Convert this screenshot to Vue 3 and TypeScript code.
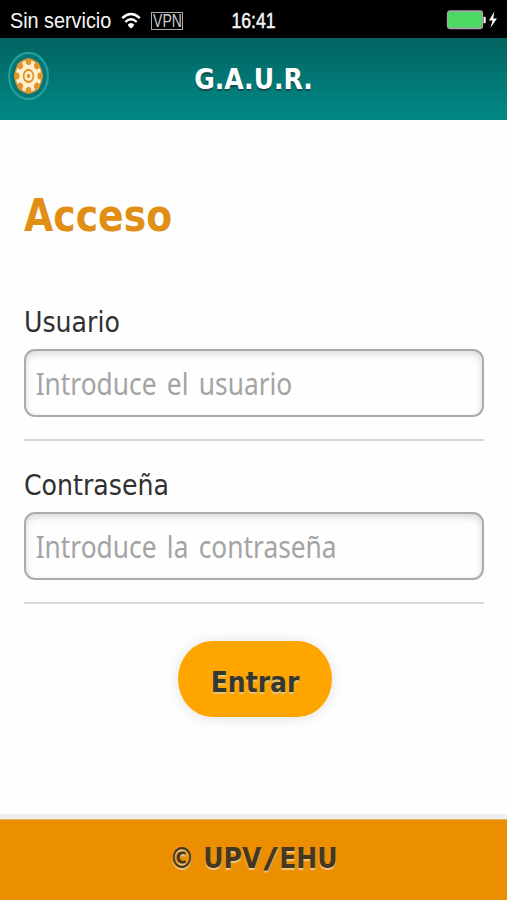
<script setup lang="ts">
import { ref } from 'vue'

interface Field {
  id: string
  label: string
  placeholder: string
  type: 'text' | 'password'
}

const fields: Field[] = [
  { id: 'user', label: 'Usuario', placeholder: 'Introduce el usuario', type: 'text' },
  { id: 'password', label: 'Contraseña', placeholder: 'Introduce la contraseña', type: 'password' },
]
const values = ref<Record<string, string>>({ user: '', password: '' })
const notches = [0, 45, 90, 135, 180, 225, 270, 315]
</script>

<template>
  <div class="screen">
    <div class="status">
      <div class="carrier">
        <span class="carrier-name">Sin servicio</span>
        <svg class="wifi" width="20" height="18" viewBox="0 0 20 18">
          <path d="M1.2 6.2Q10-2 18.8 6.2M4.3 10Q10 4.6 15.7 10" fill="none" stroke="#fff" stroke-width="2.4" />
          <path d="M6.8 12.6Q10 9.6 13.2 12.6Q13 14.5 10 16.6Q7 14.5 6.8 12.6Z" fill="#fff" />
        </svg>
        <span class="vpn"><span class="vpn-text">VPN</span></span>
      </div>
      <span class="clock">16:41</span>
      <svg class="battery" width="52" height="22" viewBox="0 0 52 22">
        <rect x="1.5" y="2" width="35" height="17.5" rx="2.5" fill="#4cd964" stroke="#b39cae" stroke-width="1.3" />
        <path d="M37.5 7.7h1.2q1 0 1 1v4.6q0 1-1 1h-1.2z" fill="#fff" />
        <path d="M48.3 2.5L43 11.6h3.6L44.4 19 51 9.6h-3.7z" fill="#fff" />
      </svg>
    </div>

    <header class="header">
      <button class="settings" type="button" aria-label="Ajustes">
        <svg width="44" height="52" viewBox="0 0 44 52">
          <ellipse cx="22" cy="26" rx="19.8" ry="23.6" fill="#047676" stroke="#22a09d" stroke-width="2.2" />
          <ellipse cx="22" cy="26" rx="14.4" ry="18" fill="#df952a" />
          <g transform="translate(22 26) scale(1 1.24)">
            <circle r="13" fill="#fff0d2" />
            <circle
              v-for="angle in notches"
              :key="angle"
              cy="-12"
              r="2.9"
              fill="#df952a"
              :transform="`rotate(${angle})`"
            />
            <circle r="5" fill="#fff0d2" stroke="#df952a" stroke-width="1.8" />
            <circle r="1.8" fill="#df952a" />
          </g>
        </svg>
      </button>
      <h1 class="title">G.A.U.R.</h1>
    </header>

    <form class="content" @submit.prevent>
      <h2 class="heading">Acceso</h2>
      <div v-for="field in fields" :key="field.id" class="field">
        <label class="label" :for="field.id">{{ field.label }}</label>
        <div class="box">
          <input
            :id="field.id"
            v-model="values[field.id]"
            class="input"
            :type="field.type"
            :placeholder="field.placeholder"
          />
        </div>
      </div>
      <button class="submit" type="submit"><span class="submit-text">Entrar</span></button>
    </form>

    <footer class="footer">
      <div class="footer-text">© UPV<span class="slash">/</span>EHU</div>
    </footer>
  </div>
</template>

<style>
body {
  margin: 0;
  background: #fefefe;
}
</style>

<style scoped>
.screen {
  display: flex;
  flex-direction: column;
  width: 100%;
  height: 900px;
  overflow: hidden;
  background: #fefefe;
  font-family: 'DejaVu Sans', sans-serif;
  color: #303030;
}

.status {
  display: grid;
  grid-template-columns: 1fr auto 1fr;
  align-items: center;
  box-sizing: border-box;
  height: 38px;
  padding: 0 9px 0 10px;
  background: #000;
  color: #f5f5f5;
  font: 22px/38px 'Liberation Sans', sans-serif;
}

.carrier {
  display: flex;
  align-items: center;
  padding-top: 1px;
}

.carrier-name {
  width: 111px;
  white-space: nowrap;
  transform: scaleX(0.9);
  transform-origin: left;
}

.vpn {
  display: flex;
  justify-content: center;
  box-sizing: border-box;
  width: 32px;
  height: 18px;
  margin-left: 10px;
  border: 1px solid #aaa;
  font-size: 18px;
  line-height: 17px;
  color: #ccc;
}

.vpn-text {
  transform: scaleX(0.78);
}

.clock {
  padding-top: 2px;
  -webkit-text-stroke: 0.5px #f5f5f5;
  transform: scaleX(0.8);
}

.battery {
  justify-self: end;
}

.header {
  display: grid;
  grid-template-columns: 50px 1fr 50px;
  align-items: center;
  height: 82px;
  background: linear-gradient(#026360, #028785 92%, #028785);
}

.settings {
  display: flex;
  margin: 0 0 7px 7px;
  padding: 0;
  border: 0;
  background: none;
}

.title {
  margin: 0;
  text-align: center;
  font-size: 29px;
  line-height: 80px;
  color: #fff;
  text-shadow: 0 2px 1px #154d4c;
  transform: scaleX(0.865);
}

.content {
  display: flex;
  flex: 1;
  flex-direction: column;
  padding: 66px 23px 0 24px;
}

.heading {
  margin: 0 0 63px;
  font-size: 45px;
  line-height: 60px;
  color: #e18f14;
  transform: scaleX(0.84);
  transform-origin: left;
}

.field {
  box-sizing: border-box;
  height: 132px;
  margin-bottom: 31px;
  border-bottom: 2px solid #d8d8d8;
}

.label {
  display: block;
  height: 40px;
  font-size: 29px;
  line-height: 27px;
  transform: scaleX(0.87);
  transform-origin: left;
}

.box {
  box-sizing: border-box;
  height: 68px;
  border: 2px solid #ababab;
  border-radius: 11px;
  box-shadow: inset 0 3px 7px #d8d8d8;
  overflow: hidden;
}

.input {
  box-sizing: border-box;
  width: 114%;
  height: 64px;
  padding: 0 10px 0 11px;
  border: 0;
  outline: 0;
  background: transparent;
  font: 30px/60px 'Noto Sans', sans-serif;
  word-spacing: 4px;
  color: #303030;
  transform: scaleX(0.877);
  transform-origin: left;
}

.input::placeholder {
  color: #a4a4a4;
  opacity: 1;
}

.submit {
  align-self: center;
  width: 154px;
  height: 76px;
  margin: 6px 0 0 1px;
  padding: 4px 0 0;
  border: 0;
  border-radius: 34px / 38px;
  background: #ffa500;
  box-shadow: 0 1px 14px rgba(0, 0, 0, 0.12);
  font: bold 29px/72px 'DejaVu Sans', sans-serif;
  color: #36382f;
}

.submit-text {
  display: block;
  padding-top: 1px;
  text-shadow: 0 2px 1px #e4c477;
  transform: scaleX(0.865);
}

.footer {
  height: 81px;
  border-top: 1px solid #e3b562;
  box-sizing: border-box;
  background: #eb8f00;
  box-shadow: 0 -5px 0 #eee;
  text-align: center;
  font-weight: bold;
  font-size: 29px;
  line-height: 77px;
  color: #46371f;
  text-shadow: 0 2px 1px #efc684;
}

.footer-text {
  transform: scaleX(0.865);
}

.slash {
  display: inline-block;
  margin: 0 5px;
  transform: scaleX(1.6);
}
</style>
